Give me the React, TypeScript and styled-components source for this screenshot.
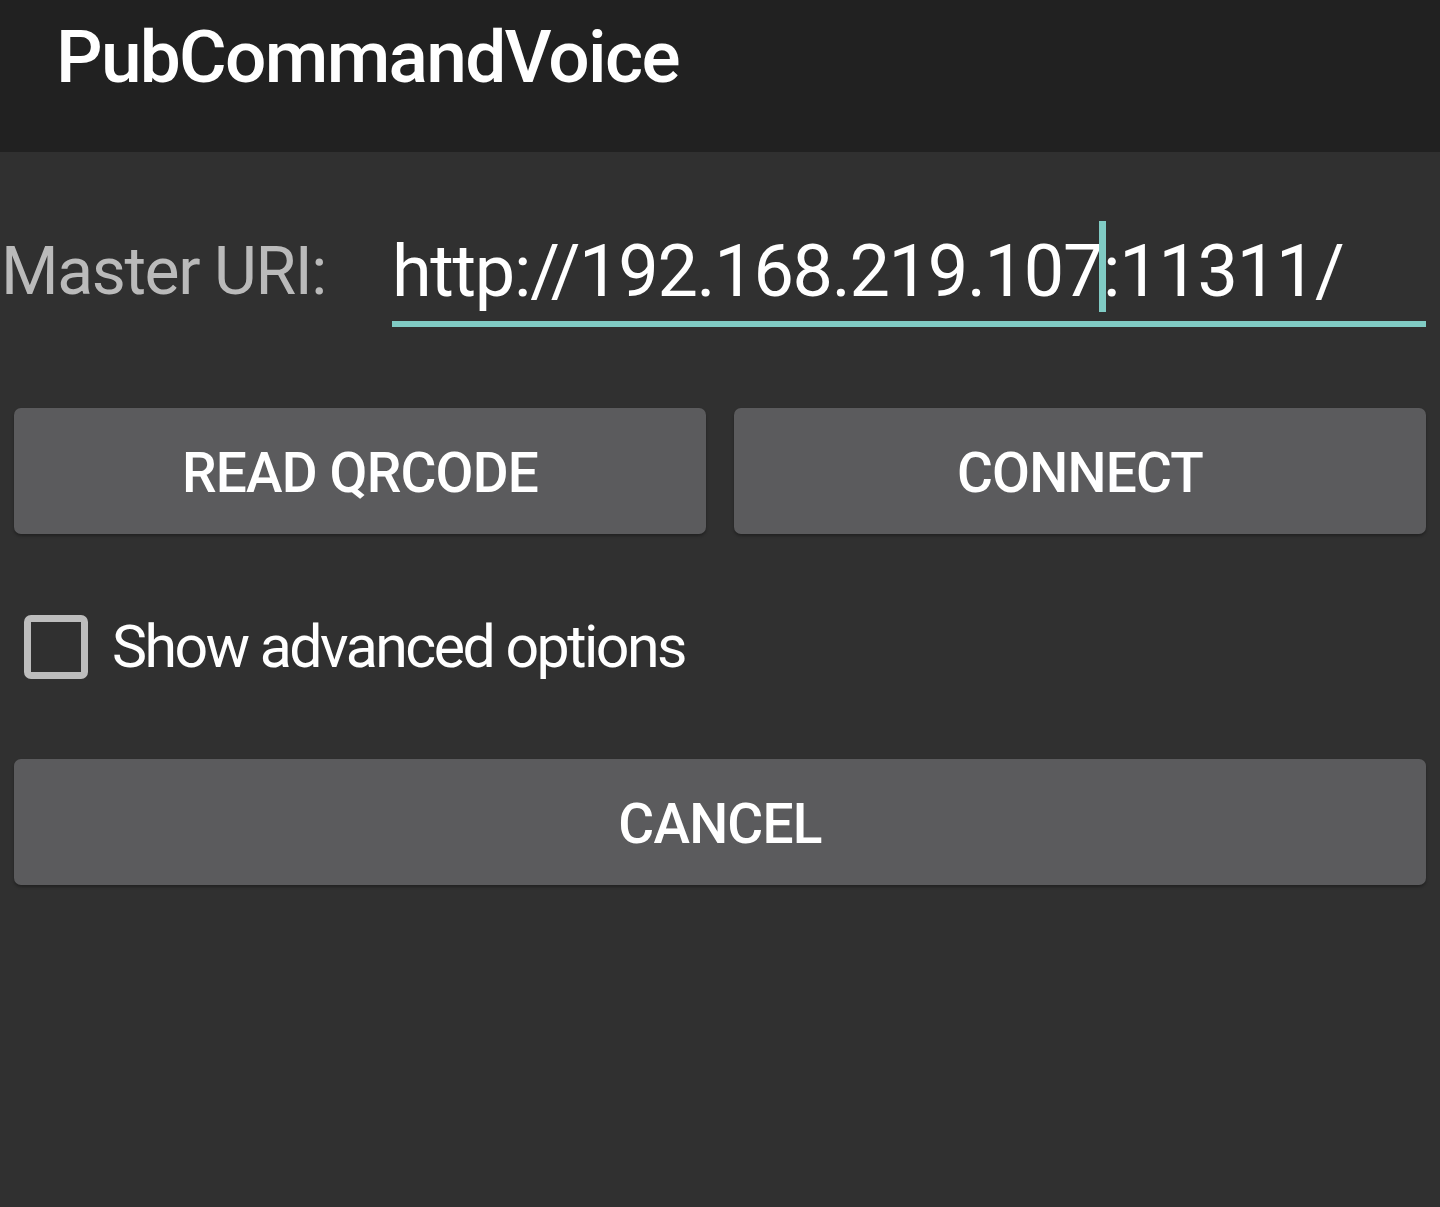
import React, { useState } from 'react';
import styled, { createGlobalStyle } from 'styled-components';

const GlobalStyle = createGlobalStyle`
  html, body {
    margin: 0;
    padding: 0;
    background: #303030;
  }
  body {
    font-family: Roboto, "Noto Sans", "Liberation Sans", sans-serif;
    overflow: hidden;
  }
`;

const Screen = styled.div`
  width: 1440px;
  height: 1207px;
  background: #303030;
  display: flex;
  flex-direction: column;
`;

const AppBar = styled.header`
  height: 152px;
  background: #212121;
  display: flex;
  align-items: flex-start;
  padding-left: 56px;
  box-sizing: border-box;
`;

const Title = styled.h1`
  margin: 0;
  margin-top: 14px;
  font-size: 73px;
  line-height: 86px;
  font-weight: 500;
  color: #ffffff;
  letter-spacing: -1.7px;
`;

const Content = styled.main`
  display: flex;
  flex-direction: column;
  padding: 0 14px;
`;

const FieldRow = styled.div`
  display: flex;
  align-items: flex-end;
  margin-top: 70px;
  margin-left: -13px;
  height: 105px;
`;

const Label = styled.label`
  width: 391px;
  flex-shrink: 0;
  font-size: 66px;
  line-height: 80px;
  color: #bababa;
  letter-spacing: -1.4px;
  padding-bottom: 15px;
`;

const InputWrap = styled.div`
  flex: 1;
  height: 105px;
  border-bottom: 6px solid #80cbc4;
  box-sizing: border-box;
  display: flex;
  align-items: flex-end;
`;

const UriText = styled.span`
  font-size: 72px;
  line-height: 80px;
  color: #ffffff;
  letter-spacing: -1.3px;
  padding-bottom: 9px;
  white-space: pre;
`;

const Caret = styled.span`
  display: inline-block;
  width: 7px;
  height: 91px;
  background: #80cbc4;
  vertical-align: -16px;
  margin: 0 -3px 0 -3px;
`;

const ButtonRow = styled.div<{ $top: number }>`
  display: flex;
  gap: 28px;
  margin-top: ${p => p.$top}px;
`;

const Button = styled.button`
  flex: 1;
  height: 126px;
  border: none;
  border-radius: 7px;
  background: #5b5b5d;
  color: #ffffff;
  font-family: Roboto, "Noto Sans", "Liberation Sans", sans-serif;
  font-size: 55px;
  font-weight: 500;
  letter-spacing: -0.8px;
  text-transform: uppercase;
  box-shadow: 0 2px 3px rgba(0, 0, 0, 0.3);
  cursor: pointer;
  padding: 0;
  padding-top: 4px;
`;

const CheckRow = styled.label`
  display: flex;
  align-items: center;
  gap: 24px;
  margin-top: 81px;
  margin-left: 10px;
  height: 63px;
  cursor: pointer;
`;

const Box = styled.span<{ $checked: boolean }>`
  width: 64px;
  height: 64px;
  box-sizing: border-box;
  border: 7px solid #bdbdbd;
  border-radius: 7px;
  background: ${p => (p.$checked ? '#80cbc4' : 'transparent')};
  flex-shrink: 0;
`;

const CheckText = styled.span`
  font-size: 59px;
  color: #ffffff;
  letter-spacing: -2.5px;
`;

export default function App() {
  const [advanced, setAdvanced] = useState(false);

  return (
    <>
      <GlobalStyle />
      <Screen>
        <AppBar>
          <Title>PubCommandVoice</Title>
        </AppBar>
        <Content>
          <FieldRow>
            <Label>Master URI:</Label>
            <InputWrap>
              <UriText>
                http://192.168.219.107<Caret />:11311/
              </UriText>
            </InputWrap>
          </FieldRow>
          <ButtonRow $top={81}>
            <Button>Read QRCode</Button>
            <Button>Connect</Button>
          </ButtonRow>
          <CheckRow onClick={() => setAdvanced(!advanced)}>
            <Box $checked={advanced} />
            <CheckText>Show advanced options</CheckText>
          </CheckRow>
          <ButtonRow $top={81}>
            <Button>Cancel</Button>
          </ButtonRow>
        </Content>
      </Screen>
    </>
  );
}
